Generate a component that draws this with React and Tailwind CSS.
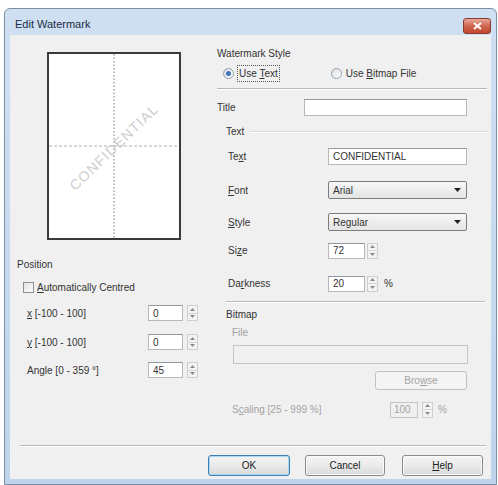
import React from "react";

function U({ children }) {
  return <span className="underline underline-offset-[1px]">{children}</span>;
}

function Input({ w, children, className = "" }) {
  return (
    <div
      className={`h-[16px] bg-white border border-[#b5b8bd] border-t-[#9298a0] flex items-center px-[4px] text-[10px] text-[#333] ${className}`}
      style={{ width: w }}
    >
      {children}
    </div>
  );
}

function Spin({ h = 16 }) {
  return (
    <div className="w-[11px] flex flex-col border border-[#cfcfcf] bg-[#f3f3f3]" style={{ height: h }}>
      <div className="flex-1 flex items-center justify-center border-b border-[#d6d6d6]">
        <svg width="5" height="3" viewBox="0 0 5 3">
          <path d="M0 3 L2.5 0 L5 3Z" fill="#8a8a8a" />
        </svg>
      </div>
      <div className="flex-1 flex items-center justify-center">
        <svg width="5" height="3" viewBox="0 0 5 3">
          <path d="M0 0 L2.5 3 L5 0Z" fill="#8a8a8a" />
        </svg>
      </div>
    </div>
  );
}

function Select({ value }) {
  return (
    <div className="w-[139px] h-[18px] rounded-[2px] border border-[#7d7d7d] bg-gradient-to-b from-[#f7f7f7] to-[#e4e4e4] flex items-center justify-between pl-[4px] pr-[5px] text-[10px] text-[#333]">
      <span>{value}</span>
      <svg width="7" height="4" viewBox="0 0 7 4">
        <path d="M0 0 L3.5 4 L7 0Z" fill="#222" />
      </svg>
    </div>
  );
}

function Radio({ checked }) {
  return (
    <span className="w-[11px] h-[11px] rounded-full border border-[#8f9fb2] bg-gradient-to-br from-[#dcdcdc] to-white flex items-center justify-center">
      {checked && <span className="w-[5px] h-[5px] rounded-full bg-[#3f76bb]" />}
    </span>
  );
}

function Sep({ className = "" }) {
  return <div className={`h-[2px] border-t border-[#b9b9b9] border-b border-b-white ${className}`} />;
}

function Btn({ children, w, def }) {
  return (
    <div
      className={`h-[21px] rounded-[3px] border flex items-center justify-center text-[10px] text-[#222] bg-gradient-to-b from-[#f4f4f4] via-[#ebebeb] to-[#d9d9d9] ${
        def ? "border-[#3c7fb1] shadow-[inset_0_0_0_1px_#a9d8f5]" : "border-[#8a8a8a] shadow-[inset_0_0_0_1px_#fbfbfb]"
      }`}
      style={{ width: w }}
    >
      {children}
    </div>
  );
}

export default function App() {
  return (
    <div className="w-[498px] h-[485px] bg-white pt-[8px] pl-[4px] font-['Liberation_Sans',Arial,sans-serif] overflow-hidden">
      <div className="w-[493px] h-[477px] flex flex-col border border-[#7b8ea5] rounded-t-[6px] bg-gradient-to-b from-[#cfe0f2] to-[#bed4ec]">
        {/* Title bar */}
        <div className="h-[26px] flex items-center justify-between pl-[10px] pr-[5px]">
          <span className="text-[11px] text-[#1c2b44] mt-[5px]">Edit Watermark</span>
          <div className="w-[28px] h-[16px] mt-[8px] rounded-[3px] border border-[#8a3b2e] bg-gradient-to-b from-[#e7a899] via-[#cf6550] to-[#c24630] flex items-center justify-center">
            <svg width="9" height="8" viewBox="0 0 9 8">
              <path d="M1 1 L8 7 M8 1 L1 7" stroke="#fff" strokeWidth="2" />
            </svg>
          </div>
        </div>

        {/* Content */}
        <div className="mx-[5px] mb-[5px] flex-1 bg-[#f0f0f0] flex flex-col text-[10px] text-[#333]">
          <div className="h-[410px] flex">
            {/* Left column */}
            <div className="w-[195px] flex flex-col">
              <div className="ml-[37px] mt-[17px] w-[134px] h-[188px] border-2 border-[#3a3a3a] bg-white">
                <svg width="130" height="184" viewBox="0 0 130 184">
                  <line x1="65" y1="0" x2="65" y2="184" stroke="#a8a8a8" strokeWidth="1.5" strokeDasharray="1.5 2" />
                  <line x1="0" y1="92" x2="130" y2="92" stroke="#b0b0b0" strokeWidth="1" strokeDasharray="3 2" />
                  <text
                    x="65"
                    y="93"
                    textAnchor="middle"
                    dominantBaseline="central"
                    fontSize="14"
                    letterSpacing="1.2"
                    fill="#cdcdcd"
                    fontFamily="Liberation Sans, Arial, sans-serif"
                    transform="rotate(-44 65 93)"
                  >
                    CONFIDENTIAL
                  </text>
                </svg>
              </div>

              <div className="mt-[17px] h-[14px] flex items-center pl-[7px]">Position</div>
              <div className="mt-[9px] h-[14px] flex items-center pl-[13px] gap-[3px]">
                <span className="w-[11px] h-[11px] border border-[#8e8f8f] bg-gradient-to-br from-[#e2e2e2] to-white" />
                <span>
                  <U>A</U>utomatically Centred
                </span>
              </div>
              <div className="mt-[11px] h-[16px] flex items-center pl-[17px]">
                <span className="w-[121px]">
                  <U>x</U> [-100 - 100]
                </span>
                <Input w={35}>0</Input>
                <div className="ml-[4px]">
                  <Spin />
                </div>
              </div>
              <div className="mt-[13px] h-[16px] flex items-center pl-[17px]">
                <span className="w-[121px]">
                  <U>y</U> [-100 - 100]
                </span>
                <Input w={35}>0</Input>
                <div className="ml-[4px]">
                  <Spin />
                </div>
              </div>
              <div className="mt-[12px] h-[16px] flex items-center pl-[17px]">
                <span className="w-[121px]">Angle [0 - 359 °]</span>
                <Input w={35}>45</Input>
                <div className="ml-[4px]">
                  <Spin />
                </div>
              </div>
            </div>

            {/* Right column */}
            <div className="ml-[12px] w-[270px] flex flex-col">
              <div className="mt-[10px] h-[16px] flex items-center">Watermark Style</div>
              <div className="mt-[4px] h-[16px] flex items-center pl-[6px]">
                <Radio checked />
                <span className="ml-[3px] px-[1px] border border-dotted border-[#555]">
                  Use <U>T</U>ext
                </span>
                <span className="ml-[51px]">
                  <Radio />
                </span>
                <span className="ml-[4px]">
                  Use <U>B</U>itmap File
                </span>
              </div>
              <Sep className="mt-[7px]" />
              <div className="mt-[8px] h-[18px] flex items-center">
                <span className="w-[87px]">Title</span>
                <Input w={163} className="h-[17px]" />
              </div>
              <div className="mt-[8px] h-[14px] flex items-center pl-[9px] gap-[6px]">
                <span>Text</span>
                <div className="flex-1 h-[2px] border-t border-[#dadada] border-b border-b-white mt-[1px]" />
              </div>
              <div className="mt-[9px] h-[18px] flex items-center pl-[11px]">
                <span className="w-[100px]">
                  Te<U>x</U>t
                </span>
                <Input w={139} className="h-[17px]">CONFIDENTIAL</Input>
              </div>
              <div className="mt-[16px] h-[18px] flex items-center pl-[11px]">
                <span className="w-[100px]">
                  <U>F</U>ont
                </span>
                <Select value="Arial" />
              </div>
              <div className="mt-[14px] h-[18px] flex items-center pl-[11px]">
                <span className="w-[100px]">
                  <U>S</U>tyle
                </span>
                <Select value="Regular" />
              </div>
              <div className="mt-[11px] h-[17px] flex items-center pl-[11px]">
                <span className="w-[100px]">
                  Si<U>z</U>e
                </span>
                <Input w={37}>72</Input>
                <div className="ml-[2px]">
                  <Spin />
                </div>
              </div>
              <div className="mt-[16px] h-[17px] flex items-center pl-[11px]">
                <span className="w-[100px]">
                  Da<U>r</U>kness
                </span>
                <Input w={37}>20</Input>
                <div className="ml-[2px]">
                  <Spin />
                </div>
                <span className="ml-[6px]">%</span>
              </div>
              <Sep className="mt-[9px] ml-[9px] mr-[2px]" />
              <div className="mt-[4px] h-[14px] flex items-center pl-[9px]">Bitmap</div>
              <div className="mt-[4px] h-[14px] flex items-center pl-[15px] text-[#a3a3a3]">File</div>
              <div className="mt-[6px] ml-[16px] w-[235px] h-[19px] border border-[#c4c4c4] bg-[#f0f0f0]" />
              <div className="mt-[7px] h-[19px] flex pl-[158px]">
                <div className="w-[92px] h-[19px] rounded-[3px] border border-[#c2c2c2] bg-[#f4f4f4] flex items-center justify-center text-[#a3a3a3]">
                  Bro<U>w</U>se
                </div>
              </div>
              <div className="mt-[11px] h-[17px] flex items-center pl-[15px] text-[#a3a3a3]">
                <span className="w-[158px]">
                  S<U>c</U>aling [25 - 999 %]
                </span>
                <div className="w-[28px] h-[16px] border border-[#c4c4c4] bg-[#f0f0f0] flex items-center px-[3px]">100</div>
                <div className="ml-[4px]">
                  <Spin />
                </div>
                <span className="ml-[5px]">%</span>
              </div>
            </div>
          </div>

          <Sep className="ml-[10px] mr-[5px]" />
          <div className="mt-[8px] h-[21px] flex pl-[198px]">
            <Btn w={82} def>
              OK
            </Btn>
            <div className="ml-[15px]">
              <Btn w={80}>Cancel</Btn>
            </div>
            <div className="ml-[17px]">
              <Btn w={81}>
                <U>H</U>elp
              </Btn>
            </div>
          </div>
        </div>
      </div>
    </div>
  );
}
